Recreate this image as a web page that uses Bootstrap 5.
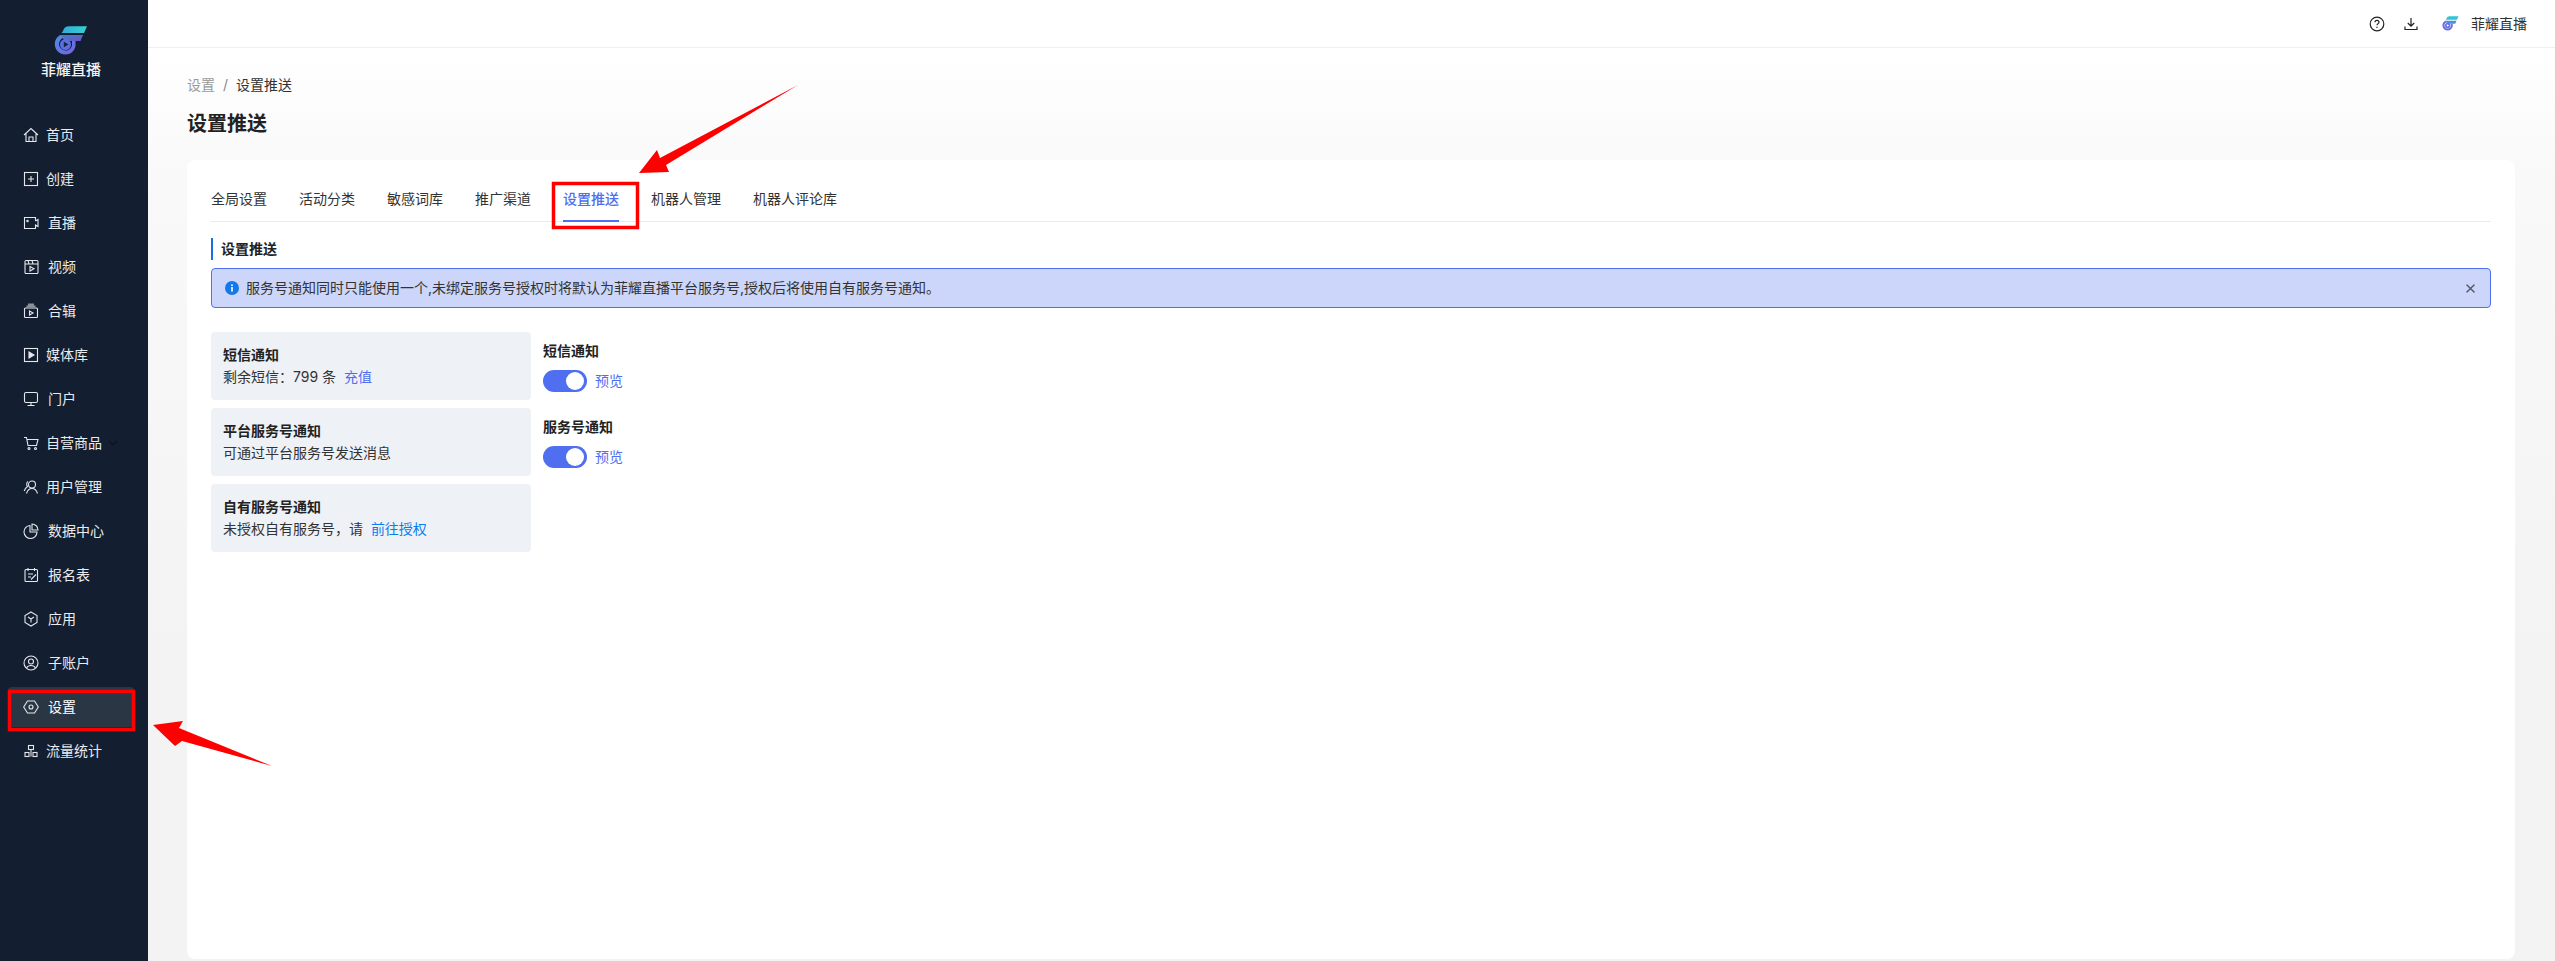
<!DOCTYPE html>
<html lang="zh-CN">
<head>
<meta charset="utf-8">
<title>设置推送</title>
<link href="https://cdn.jsdelivr.net/npm/bootstrap@5.3.0/dist/css/bootstrap.min.css" rel="stylesheet">
<style>
html,body{height:100%;overflow:hidden}
body{font-family:"Inter","Noto Sans CJK SC",sans-serif;font-size:14px;line-height:22px;color:#333;background:#fff}
.shell{height:961px;position:relative}
.side{width:148px;background:#131e30;color:#eef0f3;flex:none}
.brand{height:113px;padding:26px 6px 0 0}
.brand-name{font-size:15px;font-weight:500;line-height:22px;margin-top:4px;color:#f2f3f5}
.nv-item{height:40px;margin:2px 14px 2px 8px;padding-left:15px;color:#e9ebef;border-radius:4px;font-size:14px;position:relative}
.nv-item.is-on{background:#2b3645;color:#fff}
.nv-icon{width:16px;height:16px;flex:none;margin-right:7px;fill:none;stroke:#e4e7eb;stroke-width:1.1}
.far{margin-left:2px}
.nv-caret{position:absolute;left:100px;top:16px;width:10px;height:8px;fill:none;stroke:#0b1320;stroke-width:1.2}
.main-col{background:linear-gradient(#fff 48px,#f9f9f9 170px,#f3f3f3 640px);min-width:0}
.topbar{height:48px;background:#fff;border-bottom:1px solid #efefef;padding-right:28px;color:#333}
.top-ico{width:16px;height:16px;fill:none;stroke:#222;stroke-width:1.2}
.top-help{margin-right:18px}
.top-logo{margin:0 12px 0 23px}
.page{padding:26px 40px 2px 39px}
.crumbs{--bs-breadcrumb-margin-bottom:0;--bs-breadcrumb-divider-color:#888;--bs-breadcrumb-item-active-color:#333;font-size:14px}
.crumbs .breadcrumb-item:first-child{color:#999}
.page-title{font-size:20px;line-height:28px;font-weight:600;color:#222;margin:14px 0 22px}
.sheet{border-radius:8px;padding:24px;border:0}
.tabbar{--bs-nav-link-color:#333;--bs-nav-link-hover-color:#333;border-bottom:1px solid #eaeaea;height:38px;gap:32px}
.tabbar .nav-link{padding:4px 0 0;height:38px;font-size:14px;line-height:22px;color:#333;border-radius:0}
.tabbar .nav-link.active{color:#4f6ef0;font-weight:500;border-bottom:2px solid #4f6ef0;background:none}
.sec-title{margin:16px 0 8px;border-left:2px solid #1a6ee6;padding-left:8px;font-weight:600;color:#222;height:22px}
.tip{--bs-alert-margin-bottom:0;--bs-alert-border-radius:4px;height:40px;padding:0 14px 0 13px;background:#ccd6fa;border:1px solid #4f6ef0;color:#333;margin-bottom:24px}
.tip .btn-close{font-size:11px;padding:0;opacity:.6}
.tip-ico{width:14px;height:14px;flex:none;margin-right:7px}
.left-col{width:320px}
.info-box{height:68px;background:#eef1f6;border-radius:4px;padding:12px}
.info-title{font-weight:600;color:#222}
.lnk-a{color:#4f6ef0;text-decoration:none}
.lnk-b{color:#0a7cf0;text-decoration:none}
.swt{min-height:0;padding:0;margin:8px 0 24px}
.swt .form-check-input{width:44px;height:22px;margin:0;background-color:#4f6ef0;border:0;background-size:24px;background-position:right -2px center;flex:none}
.notes{position:absolute;left:0;top:0;width:2555px;height:961px;pointer-events:none}
</style>
</head>
<body>
<div class="shell d-flex">
  <aside class="side d-flex flex-column">
    <div class="brand d-flex flex-column align-items-center">
      <svg width="34" height="29" viewBox="0 0 34 29">
        <defs>
          <linearGradient id="gw" x1="0" y1="0" x2="1" y2="0"><stop offset="0" stop-color="#35a9d8"/><stop offset="1" stop-color="#33d3cf"/></linearGradient>
          <linearGradient id="gr" x1="0" y1="0" x2="1" y2="1"><stop offset="0" stop-color="#4a8fe4"/><stop offset="1" stop-color="#7a5fe0"/></linearGradient>
        </defs>
        <path d="M9 5C10 1.500 12 .2 15 .2H33L30 7H7.500Z" fill="url(#gw)"/>
        <path d="M6 9H29L26.500 15H11Z" fill="url(#gr)" opacity=".85"/>
        <path d="M6.500 9C2.500 11 .8 14.500 .8 18C.8 24 5.500 28.500 11.500 28.500C16.500 28.500 20.500 25 21.500 20V15H18V19C17.500 22.500 15 24.500 11.500 24.500C8 24.500 5 21.500 5 18C5 15.500 6.500 13 9.500 11.500Z" fill="url(#gr)"/>
        <circle cx="11.500" cy="18.500" r="5.500" fill="#5a6fe0"/>
        <path d="M9.800 15.800L14.500 18.500L9.800 21.200Z" fill="#17243c"/>
      </svg>
      <div class="brand-name">菲耀直播</div>
    </div>
    <nav class="d-flex flex-column">
      <a class="nv-item d-flex align-items-center text-decoration-none"><svg class="nv-icon" viewBox="0 0 16 16"><path d="M1 8L8 1.500L15 8M3 6.500V14.500H13V6.500M6 14.500V10H10V14.500"/></svg>首页</a>
      <a class="nv-item d-flex align-items-center text-decoration-none"><svg class="nv-icon" viewBox="0 0 16 16"><rect x="1.500" y="1.500" width="13" height="13"/><path d="M8 5V11M5 8H11"/></svg>创建</a>
      <a class="nv-item d-flex align-items-center text-decoration-none"><svg class="nv-icon" viewBox="0 0 16 16"><path d="M12.500 6V2.500H1.500V13.500H12.500V10L15 11.500V4.500L12.500 6"/><circle cx="4.500" cy="6" r=".7"/></svg><span class="far">直播</span></a>
      <a class="nv-item d-flex align-items-center text-decoration-none"><svg class="nv-icon" viewBox="0 0 16 16"><rect x="2" y="1.500" width="13" height="13" rx="1"/><path d="M2 5H15M5 1.500L6 5M9 1.500L10 5M7 7.500V12L11 9.800Z"/></svg><span class="far">视频</span></a>
      <a class="nv-item d-flex align-items-center text-decoration-none"><svg class="nv-icon" viewBox="0 0 16 16"><rect x="1.500" y="5" width="13" height="9.500" rx="1"/><path d="M3.500 3.500H12.500M5 1.500H11" stroke-width="1.800" stroke="#8a8f98"/><path d="M6.500 8V12L10 10Z"/></svg><span class="far">合辑</span></a>
      <a class="nv-item d-flex align-items-center text-decoration-none"><svg class="nv-icon" viewBox="0 0 16 16"><rect x="1.500" y="1.500" width="13" height="13"/><path d="M6 5V11L11 8Z" fill="#e4e7eb"/></svg>媒体库</a>
      <a class="nv-item d-flex align-items-center text-decoration-none"><svg class="nv-icon" viewBox="0 0 16 16"><rect x="1.500" y="1.500" width="13" height="10" rx="1.500"/><path d="M8 11.500V14M4.500 14.500H11.500"/></svg><span class="far">门户</span></a>
      <a class="nv-item d-flex align-items-center text-decoration-none"><svg class="nv-icon" viewBox="0 0 16 16"><path d="M1 2.500H3.500L5 10.500H13.500L15 4.500H4"/><circle cx="6" cy="13.500" r="1"/><circle cx="12.500" cy="13.500" r="1"/></svg>自营商品<svg class="nv-caret" viewBox="0 0 10 8"><path d="M1 2L5 6L9 2"/></svg></a>
      <a class="nv-item d-flex align-items-center text-decoration-none"><svg class="nv-icon" viewBox="0 0 16 16"><circle cx="9" cy="5.500" r="3.500"/><path d="M3.500 14.500C4.500 11 6.500 9.500 9 9.500S13.500 11 14.500 14.500M5 2.500C3.500 3.500 3.200 6 4.500 7.500C3 8.500 1.800 10 1.200 12"/></svg>用户管理</a>
      <a class="nv-item d-flex align-items-center text-decoration-none"><svg class="nv-icon" viewBox="0 0 16 16"><path d="M7 2.500A6.500 6.500 0 1 0 14 9H7Z"/><path d="M9 1V7H15C15 3.700 12.300 1 9 1Z"/></svg><span class="far">数据中心</span></a>
      <a class="nv-item d-flex align-items-center text-decoration-none"><svg class="nv-icon" viewBox="0 0 16 16"><rect x="2" y="2.500" width="12.500" height="12" rx="1"/><path d="M5 1V4M11.500 1V4M5 7H10M5 10H8M8 12.500L13 7.500"/></svg><span class="far">报名表</span></a>
      <a class="nv-item d-flex align-items-center text-decoration-none"><svg class="nv-icon" viewBox="0 0 16 16"><path d="M8 1L14 4.500V11.500L8 15L2 11.500V4.500Z"/><path d="M5 6L8 8L11 6M8 8V11.500"/></svg><span class="far">应用</span></a>
      <a class="nv-item d-flex align-items-center text-decoration-none"><svg class="nv-icon" viewBox="0 0 16 16"><circle cx="8" cy="8" r="7"/><circle cx="8" cy="6.500" r="2.500"/><path d="M3.500 13C4.500 11 6 10.500 8 10.500S11.500 11 12.500 13"/></svg><span class="far">子账户</span></a>
      <a class="nv-item is-on d-flex align-items-center text-decoration-none"><svg class="nv-icon" viewBox="0 0 16 16"><path d="M4.500 2H11.500L15.300 8L11.500 14H4.500L.7 8Z"/><circle cx="8" cy="8" r="2"/></svg><span class="far">设置</span></a>
      <a class="nv-item d-flex align-items-center text-decoration-none"><svg class="nv-icon" viewBox="0 0 16 16"><rect x="5.500" y="2.500" width="5" height="4"/><rect x="2" y="9.500" width="4" height="4"/><rect x="10" y="9.500" width="4" height="4"/><path d="M8 6.500V13.500"/></svg>流量统计</a>
    </nav>
  </aside>

  <div class="main-col flex-grow-1 d-flex flex-column">
    <header class="topbar d-flex align-items-center justify-content-end">
      <svg class="top-ico top-help" viewBox="0 0 16 16"><circle cx="8" cy="8" r="6.800"/><path d="M6 6.300C6 5 7 4.300 8 4.300S10 5 10 6.200C10 7.600 8 7.700 8 9.300M8 10.700V11.900"/></svg>
      <svg class="top-ico" viewBox="0 0 16 16"><path d="M8 2V10M4.800 7L8 10.200L11.200 7M2 10.500V13.500H14V10.500"/></svg>
      <svg class="top-logo" width="17" height="15" viewBox="0 0 34 29"><path d="M9 5C10 1.500 12 .2 15 .2H33L30 7H7.500Z" fill="#33c3d4"/><path d="M6 9H29L26.500 15H11Z" fill="#4a8fe4"/><path d="M6.500 9C2.500 11 .8 14.500 .8 18C.8 24 5.500 28.500 11.500 28.500C16.500 28.500 20.500 25 21.500 20V15H18V19C17.500 22.500 15 24.500 11.500 24.500C8 24.500 5 21.500 5 18C5 15.500 6.500 13 9.500 11.500Z" fill="#6a70e2"/><circle cx="11.500" cy="18.500" r="5.500" fill="#6a70e2"/><path d="M9.800 15.800L14.500 18.500L9.800 21.200Z" fill="#fff"/></svg>
      <span>菲耀直播</span>
    </header>
    <main class="page flex-grow-1 d-flex flex-column">
      <ol class="breadcrumb crumbs">
        <li class="breadcrumb-item">设置</li>
        <li class="breadcrumb-item active">设置推送</li>
      </ol>
      <h1 class="page-title">设置推送</h1>
      <section class="card sheet flex-grow-1">
        <ul class="nav tabbar">
          <li class="nav-item"><a class="nav-link">全局设置</a></li>
          <li class="nav-item"><a class="nav-link">活动分类</a></li>
          <li class="nav-item"><a class="nav-link">敏感词库</a></li>
          <li class="nav-item"><a class="nav-link">推广渠道</a></li>
          <li class="nav-item"><a class="nav-link active">设置推送</a></li>
          <li class="nav-item"><a class="nav-link">机器人管理</a></li>
          <li class="nav-item"><a class="nav-link">机器人评论库</a></li>
        </ul>
        <div class="sec-title">设置推送</div>
        <div class="alert tip d-flex align-items-center" role="alert">
          <svg class="tip-ico" viewBox="0 0 14 14"><circle cx="7" cy="7" r="7" fill="#1677e8"/><rect x="6.200" y="6" width="1.600" height="4.600" fill="#fff"/><rect x="6.200" y="3.400" width="1.600" height="1.600" fill="#fff"/></svg>
          <span class="flex-grow-1">服务号通知同时只能使用一个,未绑定服务号授权时将默认为菲耀直播平台服务号,授权后将使用自有服务号通知。</span>
          <button type="button" class="btn-close" aria-label="关闭"></button>
        </div>
        <div class="d-flex gap-2">
          <div class="left-col d-flex flex-column gap-2">
            <div class="info-box">
              <div class="info-title">短信通知</div>
              <div>剩余短信：799 条 &nbsp;<a class="lnk-a">充值</a></div>
            </div>
            <div class="info-box">
              <div class="info-title">平台服务号通知</div>
              <div>可通过平台服务号发送消息</div>
            </div>
            <div class="info-box">
              <div class="info-title">自有服务号通知</div>
              <div>未授权自有服务号，请 &nbsp;<a class="lnk-b">前往授权</a></div>
            </div>
          </div>
          <div class="ms-1 pt-2">
            <div class="info-title">短信通知</div>
            <div class="form-check form-switch swt d-flex align-items-center gap-2">
              <input class="form-check-input" type="checkbox" role="switch" checked>
              <a class="lnk-a">预览</a>
            </div>
            <div class="info-title">服务号通知</div>
            <div class="form-check form-switch swt d-flex align-items-center gap-2">
              <input class="form-check-input" type="checkbox" role="switch" checked>
              <a class="lnk-a">预览</a>
            </div>
          </div>
        </div>
      </section>
    </main>
  </div>

  <svg class="notes" viewBox="0 0 2555 961">
    <rect x="9.500" y="691.500" width="124" height="38" fill="none" stroke="#f00" stroke-width="3.500"/>
    <rect x="553.500" y="183.500" width="84" height="44" fill="none" stroke="#f00" stroke-width="3.500"/>
    <polygon points="639,173 657,150 660,158 798,85 666,165 669,172" fill="#f00"/>
    <polygon points="153,725 183,721 179,728 272,766 182,741 175,746" fill="#f00"/>
  </svg>
</div>
<script src="https://cdn.jsdelivr.net/npm/bootstrap@5.3.0/dist/js/bootstrap.bundle.min.js"></script>
</body>
</html>
